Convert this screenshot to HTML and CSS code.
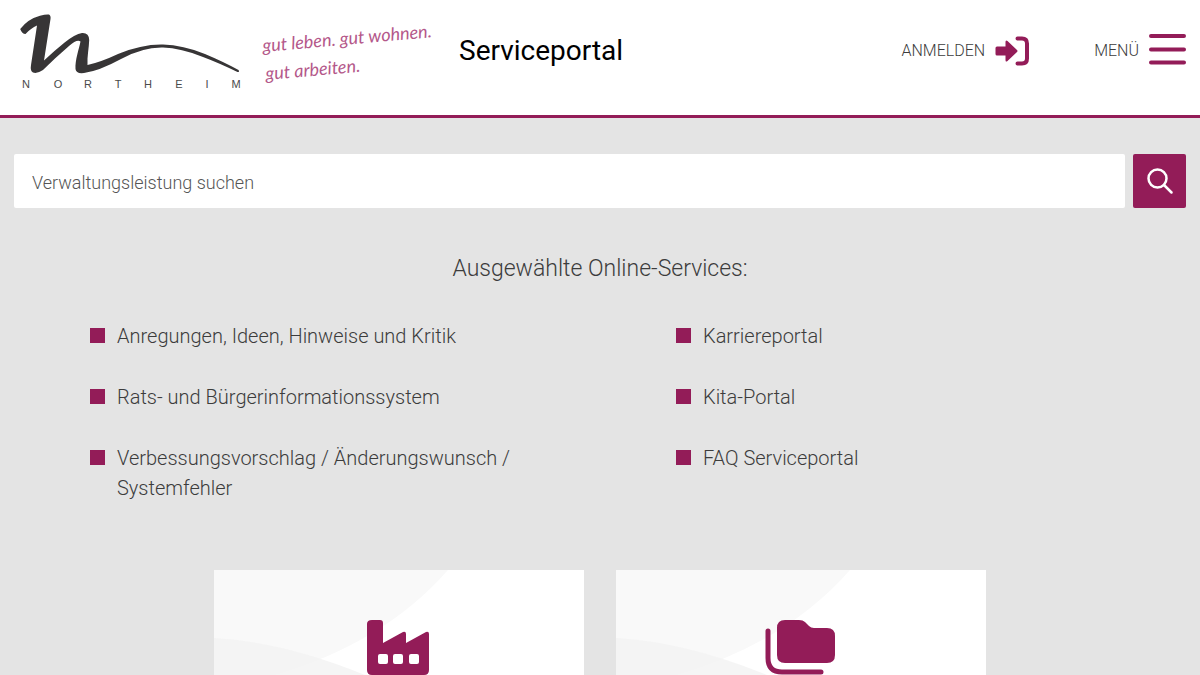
FILE: index.html
```html
<!DOCTYPE html>
<html lang="de">
<head>
<meta charset="utf-8">
<meta name="viewport" content="width=device-width, initial-scale=1">
<title>Serviceportal Northeim</title>
<link rel="stylesheet" href="styles.css">
</head>
<body>
<header class="header">
  <a class="brand" href="#" aria-label="Northeim">
    <svg class="brand-logo" width="440" height="100" viewBox="0 0 440 100">
      <path class="brand-mark" d="M20.2 28 Q28 18 40 14.800 Q46 13 49 13.500 Q51 14.500 50.500 18 L44 59.500 Q54 50 64 42 Q75 33 82 32 Q89 31.500 89.200 39 C89 47 87 55 87.500 64 Q101 61 118 53 Q142 43 163 43.500 Q183 44 205 53 Q224 61 238.500 69 Q240 71 237.500 71 Q219 62 203 56 Q181 47 163 46.500 Q143 46 121 58 Q99 70 84 72 Q76 73 75.500 68 C75 59 79 48 80.500 40.500 Q77 38 69 45 Q55 57 43 69 Q37 73 33 71.500 Q30 70 31 64 L37 24.500 Q31 27 25.500 33 Q22 33 20.200 28Z"/>
      <text class="brand-name" x="26 58 88 118 148 179 207 236" y="87">NORTHEIM</text>
      <g class="brand-claim">
        <text transform="translate(263 51) rotate(-5)">gut leben. gut wohnen.</text>
        <text transform="translate(266 79) rotate(-5)">gut arbeiten.</text>
      </g>
    </svg>
  </a>
  <h1 class="title">Serviceportal</h1>
  <nav class="nav">
    <a class="nav-item" href="#">ANMELDEN
      <svg class="icon" width="34" height="30" viewBox="0 0 34 30">
        <path d="M2 10.500h8.500V6q0-2.500 2-1l9.500 9q1 1 0 2l-9.500 9q-2 1.500-2-1v-4.500H2q-1.500 0-1.500-1.500v-6q0-1.500 1.500-1.500Z"/>
        <path class="icon-stroke" d="M22.500 2.500H27q5 0 5 5v15q0 5-5 5h-4.500"/>
      </svg>
    </a>
    <button class="nav-item" type="button">MENÜ
      <svg class="icon" width="37" height="34" viewBox="0 0 37 34">
        <path class="icon-stroke" d="M2 2h33M2 15.500h33M2 28.500h33"/>
      </svg>
    </button>
  </nav>
</header>
<main class="main">
  <form class="search" role="search">
    <input class="search-input" type="search" placeholder="Verwaltungsleistung suchen" aria-label="Verwaltungsleistung suchen">
    <button class="search-button" type="submit" aria-label="Suchen">
      <svg width="28" height="28" viewBox="0 0 28 28">
        <circle cx="11.500" cy="11.500" r="9"/>
        <path d="M18 18l7.500 7.500"/>
      </svg>
    </button>
  </form>
  <h2 class="subtitle">Ausgewählte Online-Services:</h2>
  <div class="services">
    <ul class="service-list">
      <li><a href="#">Anregungen, Ideen, Hinweise und Kritik</a></li>
      <li><a href="#">Rats- und Bürgerinformationssystem</a></li>
      <li><a href="#">Verbessungsvorschlag / Änderungswunsch / Systemfehler</a></li>
    </ul>
    <ul class="service-list">
      <li><a href="#">Karriereportal</a></li>
      <li><a href="#">Kita-Portal</a></li>
      <li><a href="#">FAQ Serviceportal</a></li>
    </ul>
  </div>
  <div class="cards">
    <a class="card" href="#" aria-label="Wirtschaft">
      <svg class="card-bg" width="370" height="105" viewBox="0 0 370 105">
        <path class="wave" d="M0 0H234Q170 73 61 105H0Z"/>
        <path class="hill" d="M0 68Q70 72 151 105H0Z"/>
      </svg>
      <svg class="card-icon" width="72" height="56" viewBox="0 0 72 56">
        <path fill-rule="evenodd" d="M9 0h8q3 0 3 3v20l20-11q3-1 3 2v9l20-11q3-1 3 2v36q0 5-5 5H9q-5 0-5-5V4q0-4 5-4ZM17 34q-2 0-2 2v6q0 2 2 2h6q2 0 2-2v-6q0-2-2-2ZM32 34q-2 0-2 2v6q0 2 2 2h6q2 0 2-2v-6q0-2-2-2ZM48 34q-2 0-2 2v6q0 2 2 2h6q2 0 2-2v-6q0-2-2-2Z"/>
      </svg>
    </a>
    <a class="card" href="#" aria-label="Dokumente">
      <svg class="card-bg" width="370" height="105" viewBox="0 0 370 105">
        <path class="wave" d="M0 0H234Q170 73 61 105H0Z"/>
        <path class="hill" d="M0 68Q70 72 151 105H0Z"/>
      </svg>
      <svg class="card-icon" width="72" height="56" viewBox="0 0 72 56">
        <path d="M20 0h14q4 0 6 2l4 4q2 2 5 2h13q8 0 8 8v19q0 8-8 8H20q-8 0-8-8V8q0-8 8-8Z"/>
        <path class="icon-stroke" d="M3 11v27q0 14 14 14h39"/>
      </svg>
    </a>
  </div>
</main>
</body>
</html>
```
FILE: styles.css
```css
:root {
  --accent: #931c58;
  --text: #3c3c3c;
}

* {
  box-sizing: border-box;
}

body {
  margin: 0;
  min-height: 100vh;
  background: #e4e4e4;
  color: var(--text);
  font-family: Roboto, "Liberation Sans", sans-serif;
  font-weight: 300;
}

a {
  color: inherit;
  text-decoration: none;
}

button {
  border: 0;
  font: inherit;
  color: inherit;
  cursor: pointer;
}

svg {
  display: block;
  flex: none;
}

.header {
  display: flex;
  align-items: center;
  height: 118px;
  padding: 0 14px 14px 0;
  background: #fff;
  border-bottom: 3px solid var(--accent);
}

.brand-mark {
  fill: #373536;
}

.brand-name {
  fill: #4a4a4a;
  font: 400 11px "Liberation Sans", sans-serif;
  text-anchor: middle;
}

.brand-claim {
  fill: #b4588a;
  font: italic 400 18px Lato, sans-serif;
}

.title {
  margin: 0 0 0 19px;
  color: #000;
  font-size: 28px;
  font-weight: 400;
  line-height: 32px;
}

.nav {
  display: flex;
  align-items: center;
  gap: 65px;
  margin-left: auto;
}

.nav-item {
  display: flex;
  align-items: center;
  gap: 10px;
  padding: 0;
  background: none;
  font-size: 16px;
}

.icon,
.card-icon {
  fill: var(--accent);
}

.icon-stroke {
  fill: none;
  stroke: var(--accent);
  stroke-width: 4;
  stroke-linecap: round;
}

.main {
  padding: 36px 14px 0;
}

.search {
  display: flex;
  gap: 8px;
}

.search-input {
  flex: 1;
  min-width: 0;
  height: 54px;
  padding: 2px 18px 0;
  border: 0;
  border-radius: 2px;
  background: #fff;
  appearance: none;
  color: var(--text);
  font: inherit;
  font-size: 18px;
}

.search-input::placeholder {
  color: #555;
  opacity: 1;
}

.search-button {
  display: grid;
  place-items: center;
  width: 53px;
  height: 54px;
  padding: 0;
  border-radius: 2px;
  background: var(--accent);
}

.search-button svg {
  fill: none;
  stroke: #fff;
  stroke-width: 2.500;
  stroke-linecap: round;
}

.subtitle {
  margin: 45px 0 36px;
  font-size: 23px;
  font-weight: 300;
  line-height: 32px;
  text-align: center;
}

.services {
  display: grid;
  grid-template-columns: 1fr 1fr;
}

.service-list {
  display: grid;
  gap: 31px;
  align-content: start;
  margin: 0;
  padding: 0 60px 0 76px;
  list-style: none;
  font-size: 20px;
  line-height: 30px;
}

.service-list li {
  display: flex;
  gap: 12px;
}

.service-list li::before {
  content: "";
  flex: none;
  width: 15px;
  height: 15px;
  margin-top: 7px;
  background: var(--accent);
}

.cards {
  display: grid;
  grid-template-columns: 1fr 1fr;
  gap: 32px;
  max-width: 772px;
  margin: 67px auto 0;
}

.card {
  position: relative;
  display: flex;
  justify-content: center;
  overflow: hidden;
  padding-top: 50px;
  background: #fff;
}

.card-bg {
  position: absolute;
  top: 0;
  left: 0;
}

.card-icon {
  position: relative;
}

.card-icon .icon-stroke {
  stroke-width: 5;
}

.wave {
  fill: #f9f9f9;
}

.hill {
  fill: #f3f3f3;
  fill-opacity: 0.8;
}
```
